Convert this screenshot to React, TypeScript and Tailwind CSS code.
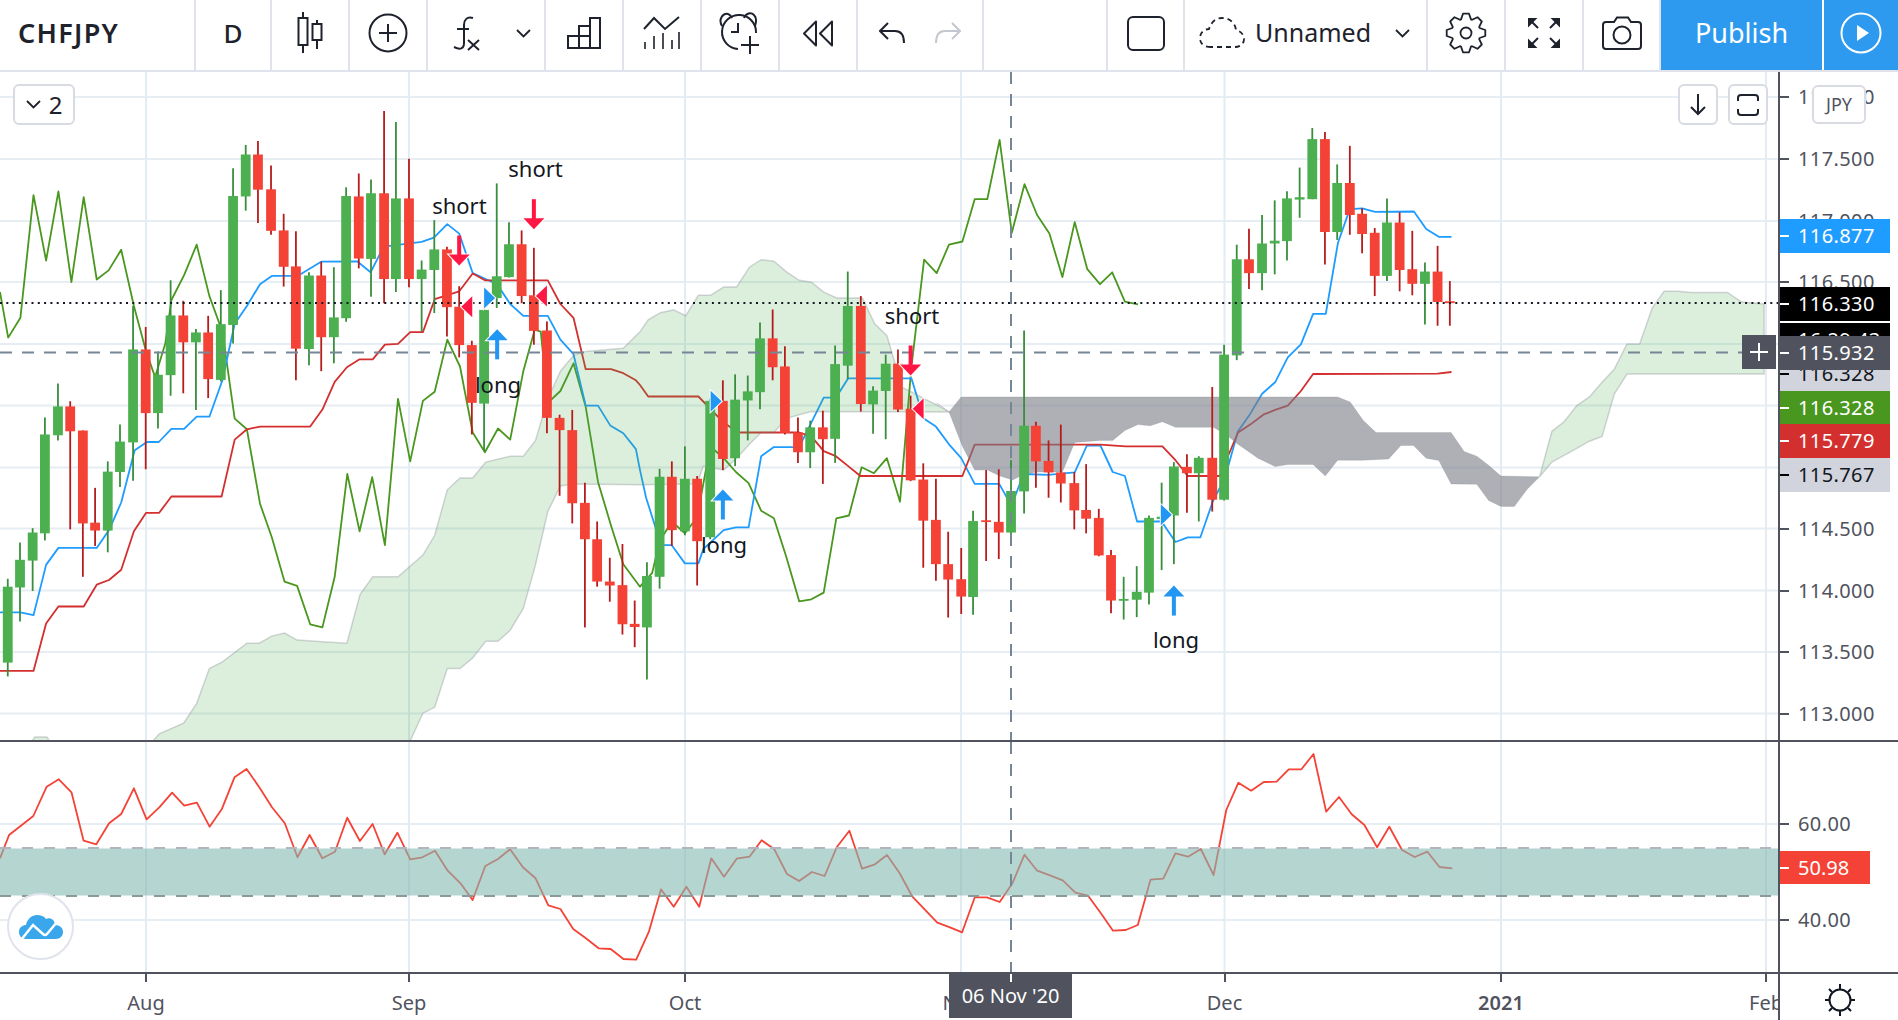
import type { ReactNode } from "react";

// Coordinates below were read off three overlapping crops of the chart.
// Each crop is 640x620 page px drawn at 1568x1568, so they get scaled back here.
const SX = 640 / 1568;
const SY = 620 / 1568;
const X3 = 0;
const X4 = 640;
const X5 = 1258;
const px = (crop: number, x: number) => crop + x * SX;
const py = (y: number) => 130 + y * SY;

type Bar = [number, number, number, number, number, number];
type Pt = [number, number];

// x, wick top, body top, body bottom, wick bottom, up
const BARS3: Bar[] = [
  [19, 1135, 1155, 1347, 1382, 1], [49, 1043, 1087, 1157, 1243, 1], [80, 1007, 1018, 1089, 1166, 1],
  [110, 727, 770, 1020, 1038, 1], [142, 641, 699, 772, 785, 1], [172, 686, 699, 762, 1010, 0],
  [203, 760, 760, 995, 1130, 0], [233, 905, 993, 1013, 1052, 0], [264, 838, 864, 1013, 1068, 1],
  [294, 745, 788, 865, 903, 1], [326, 445, 555, 790, 887, 1], [357, 498, 555, 716, 858, 0],
  [387, 560, 619, 716, 755, 1], [418, 380, 469, 620, 672, 1], [449, 432, 469, 537, 666, 0],
  [480, 503, 512, 537, 708, 1], [510, 470, 512, 630, 678, 0], [541, 405, 491, 632, 636, 1],
  [571, 97, 167, 493, 540, 1], [602, 38, 62, 168, 204, 1], [632, 28, 62, 151, 235, 0],
  [664, 90, 150, 255, 265, 0], [695, 212, 254, 346, 396, 0], [725, 256, 345, 553, 633, 0],
  [757, 360, 368, 554, 595, 1], [787, 333, 368, 524, 610, 0], [818, 347, 474, 524, 590, 1],
  [848, 145, 167, 476, 485, 1], [879, 110, 168, 325, 350, 0], [909, 125, 160, 326, 422, 1],
  [941, -48, 160, 377, 438, 0], [970, -20, 173, 377, 410, 1], [1002, 73, 173, 377, 398, 0],
  [1033, 330, 353, 377, 510, 1], [1064, 228, 302, 354, 463, 1], [1095, 295, 302, 448, 522, 0],
  [1125, 395, 447, 544, 575, 0], [1156, 533, 544, 690, 770, 0], [1186, 428, 455, 692, 812, 1],
  [1217, 135, 370, 425, 450, 1], [1247, 233, 289, 372, 373, 1], [1278, 254, 289, 420, 438, 0],
  [1308, 298, 418, 508, 543, 0], [1340, 484, 507, 728, 767, 0], [1371, 720, 728, 759, 925, 0],
  [1402, 708, 759, 944, 995, 0], [1433, 892, 943, 1035, 1258, 0], [1463, 990, 1035, 1142, 1155, 0],
  [1494, 1082, 1142, 1152, 1193, 0], [1525, 1047, 1151, 1250, 1276, 0], [1555, 1190, 1249, 1257, 1308, 0],
];
const BARS4: Bar[] = [
  [17, 1093, 1128, 1258, 1390, 1], [48, 857, 877, 1130, 1160, 1], [78, 838, 877, 1012, 1052, 0],
  [110, 800, 882, 1015, 1025, 1], [140, 875, 882, 1040, 1152, 0], [172, 680, 685, 1030, 1035, 1],
  [203, 633, 685, 832, 860, 0], [233, 618, 682, 830, 850, 1], [264, 621, 661, 684, 785, 1],
  [294, 487, 527, 663, 706, 1], [325, 454, 527, 600, 633, 0], [355, 547, 598, 766, 770, 0],
  [387, 727, 765, 815, 842, 0], [417, 735, 752, 815, 855, 1], [448, 710, 752, 782, 895, 0],
  [478, 545, 592, 781, 842, 1], [509, 358, 445, 596, 630, 1], [541, 420, 445, 693, 712, 0],
  [571, 648, 659, 694, 768, 1], [602, 568, 591, 660, 782, 1], [632, 555, 591, 707, 713, 0],
  [663, 672, 705, 886, 888, 0], [694, 843, 884, 988, 1107, 0], [725, 882, 986, 1098, 1140, 0],
  [755, 1016, 1098, 1137, 1233, 0], [787, 1057, 1136, 1180, 1224, 0], [816, 963, 989, 1181, 1226, 1],
  [848, 860, 987, 991, 1090, 0], [879, 858, 991, 1018, 1085, 0], [909, 835, 913, 1018, 1028, 1],
  [941, 507, 748, 914, 970, 1], [970, 738, 748, 838, 905, 0], [1001, 785, 837, 866, 930, 0],
  [1031, 745, 866, 894, 942, 0], [1064, 865, 893, 962, 1010, 0], [1093, 845, 961, 983, 1020, 0],
  [1124, 958, 981, 1076, 1078, 0], [1154, 1062, 1075, 1190, 1222, 0], [1185, 1130, 1186, 1190, 1238, 1],
  [1217, 1103, 1168, 1188, 1232, 1], [1247, 975, 981, 1170, 1200, 1], [1278, 892, 978, 984, 1113, 1],
  [1308, 840, 851, 975, 1098, 1], [1340, 820, 852, 868, 968, 0], [1369, 825, 829, 868, 990, 1],
  [1402, 650, 829, 935, 965, 0], [1431, 543, 568, 935, 937, 1], [1462, 290, 327, 570, 582, 1],
  [1492, 250, 327, 362, 402, 0], [1524, 215, 287, 362, 405, 1], [1555, 178, 280, 287, 365, 1],
];
const BARS5: Bar[] = [
  [71, 155, 173, 281, 330, 1], [102, 95, 170, 176, 222, 1], [133, -5, 23, 175, 175, 1],
  [164, 5, 23, 258, 340, 0], [194, 87, 134, 258, 278, 1], [225, 40, 134, 215, 265, 0],
  [255, 198, 212, 263, 312, 0], [286, 248, 260, 369, 420, 0], [316, 173, 234, 369, 382, 1],
  [347, 208, 234, 354, 408, 0], [378, 255, 352, 389, 418, 0], [409, 335, 358, 389, 492, 1],
  [440, 293, 358, 435, 495, 0], [470, 382, 433, 438, 495, 0],
];

const TENKAN3: Pt[] = [[0,1220],[50,1220],[82,1227],[113,1100],[143,1057],[237,1057],[268,1010],[297,942],[330,810],[360,789],[389,789],[420,756],[451,756],[482,725],[513,725],[545,633],[575,490],[605,445],[637,390],[666,369],[729,369],[787,333],[875,332],[908,360],[940,295],[1033,283],[1063,272],[1096,238],[1125,262],[1158,362],[1218,390],[1250,440],[1282,470],[1342,470],[1373,530],[1405,567],[1435,697],[1465,697],[1495,747],[1527,767],[1558,807]];
const TENKAN4: Pt[] = [[0,860],[15,930],[38,1005],[48,1050],[78,1050],[110,1096],[143,1096],[155,1060],[205,1012],[235,1005],[266,1005],[297,825],[328,802],[390,802],[450,677],[480,677],[510,628],[665,628],[695,730],[725,750],[757,795],[787,830],[820,895],[880,895],[910,950],[940,870],[1000,872],[1065,866],[1095,798],[1128,798],[1158,865],[1188,875],[1218,990],[1278,990],[1312,1042],[1342,1030],[1373,1030],[1403,940],[1433,880],[1465,762],[1495,718]];
const TENKAN5: Pt[] = [[10,667],[42,638],[73,575],[105,542],[135,465],[166,465],[196,285],[225,200],[255,198],[287,207],[382,206],[412,250],[443,270],[474,270]];

const KIJUN3: Pt[] = [[0,1368],[82,1368],[113,1248],[143,1205],[205,1205],[237,1150],[267,1138],[297,1112],[328,1015],[358,968],[390,968],[420,927],[543,927],[575,783],[605,757],[637,750],[760,750],[790,707],[820,637],[850,600],[881,580],[913,580],[943,543],[975,541],[1005,511],[1036,511],[1065,428],[1125,408],[1158,363],[1188,380],[1342,380],[1373,440],[1405,475],[1435,605],[1497,605],[1527,615],[1558,633]];
const KIJUN4: Pt[] = [[0,645],[20,674],[143,674],[205,740],[240,765],[390,765],[420,775],[450,812],[480,825],[510,850],[540,875],[790,875],[820,796],[1065,796],[1128,796],[1190,800],[1280,800],[1312,835],[1342,875],[1420,875],[1465,765],[1495,745],[1527,720]];
const KIJUN5: Pt[] = [[42,708],[73,697],[105,660],[135,617],[440,616],[474,612]];

const CHIKOU3: Pt[] = [[0,410],[20,525],[50,475],[82,165],[113,330],[143,155],[175,385],[205,170],[237,378],[266,355],[297,303],[328,445],[358,560],[380,625],[405,540],[420,430],[451,367],[482,290],[513,420],[545,510],[575,730],[605,757],[637,945],[666,1030],[697,1142],[728,1153],[760,1250],[790,1258],[820,1130],[851,870],[881,1015],[912,878],[943,1050],[975,680],[1005,838],[1036,685],[1065,662],[1096,530],[1127,598],[1158,765],[1188,815],[1220,755],[1250,783],[1282,610],[1310,505],[1325,510],[1342,690],[1373,660],[1405,590],[1435,700],[1465,890],[1497,1000],[1527,1098]];
const CHIKOU4: Pt[] = [[0,1155],[30,1120],[48,1040],[78,990],[110,1020],[140,980],[172,800],[205,830],[235,865],[266,893],[297,963],[328,982],[358,1078],[390,1192],[420,1187],[450,1170],[481,982],[512,975],[543,853],[573,868],[605,830],[637,940],[665,600],[696,328],[727,362],[757,290],[790,282],[820,175],[851,175],[881,25],[911,260],[942,137],[973,215],[1003,262],[1035,372],[1065,233],[1096,352],[1127,390],[1157,360],[1188,434],[1220,441]];

const CLOUD_TOP3: Pt[] = [[345,1575],[375,1545],[390,1527],[450,1500],[482,1450],[513,1362],[545,1345],[605,1298],[635,1298],[666,1280],[697,1272],[728,1290],[790,1294],[850,1298],[882,1175],[913,1130],[975,1130],[1036,1075],[1065,1025],[1096,910],[1127,880],[1158,880],[1190,840],[1250,825],[1282,825],[1312,785],[1342,680],[1373,610],[1405,570],[1435,560],[1527,552]];
const CLOUD_TOP4: Pt[] = [[0,510],[20,480],[50,462],[82,455],[112,470],[143,418],[173,418],[205,397],[237,397],[268,347],[297,328],[328,332],[358,358],[390,380],[420,385],[450,410],[482,425],[545,425],[575,490],[605,520],[625,590],[640,650],[670,665],[697,680],[727,695],[757,713]];
const CLOUD_LOW4: Pt[] = [[757,713],[420,712],[390,720],[358,730],[328,765],[297,765],[268,795],[237,830],[205,860],[155,850],[140,895],[0,897]];
const CLOUD_LOW3: Pt[] = [[1405,895],[1373,900],[1342,965],[1312,1100],[1282,1210],[1250,1265],[1220,1293],[1190,1293],[1158,1335],[1127,1362],[1096,1362],[1065,1460],[1036,1475],[1005,1545],[990,1580]];
const CLOUD_BUMP: Pt[] = [[70,1560],[85,1535],[115,1535],[130,1560]];

const GREY_TOP4: Pt[] = [[727,690],[757,713],[787,675],[1568,675]];
const GREY_TOP5: Pt[] = [[195,675],[226,688],[258,735],[289,765],[473,765],[505,813],[536,825],[565,848],[595,875],[690,877]];
const GREY_LOW5: Pt[] = [[660,908],[628,952],[595,952],[565,937],[536,896],[473,895],[443,836],[412,830],[381,798],[350,798],[320,832],[258,835],[195,835],[165,875],[135,846],[73,846],[42,851],[0,830]];
const GREY_LOW4: Pt[] = [[1465,795],[1435,770],[1405,752],[1312,752],[1280,738],[1250,748],[1220,745],[1188,760],[1158,785],[1127,785],[1065,790],[1035,865],[975,865],[943,870],[913,885],[882,875],[851,860],[820,860],[790,800],[757,713]];

const CLOUD2_TOP5: Pt[] = [[690,877],[720,762],[750,738],[781,697],[812,675],[843,638],[873,605],[904,541],[935,541],[966,450],[995,408],[1030,408],[1060,411],[1150,411],[1185,435],[1240,440]];
const CLOUD2_LOW5: Pt[] = [[1240,617],[904,617],[873,668],[843,775],[812,787],[781,805],[720,840]];

// RSI crops are 950x290 page px drawn at 1568x870
const RSI_A: Pt[] = [[0,385],[15,315],[55,258],[77,170],[97,148],[118,187],[138,332],[159,343],[180,280],[200,252],[221,175],[242,268],[263,232],[284,188],[304,227],[325,218],[346,290],[366,238],[387,142],[407,117],[428,172],[449,232],[470,280],[491,382],[511,315],[532,385],[553,365],[573,263],[594,333],[615,282],[635,373],[656,308],[677,388],[697,382],[718,362],[739,422],[760,460],[780,510],[801,408],[822,387],[842,358],[863,412],[884,445],[905,526],[925,537],[946,597],[967,625],[988,655],[1008,657],[1029,687],[1050,689],[1071,605],[1091,478],[1112,530],[1133,470],[1154,530],[1174,385],[1195,440],[1216,386],[1237,380],[1257,331],[1278,358],[1299,432],[1319,453],[1340,426],[1361,438],[1381,352],[1402,302],[1423,416],[1443,404],[1464,375],[1485,430],[1506,500],[1547,578]];
const RSI_B: Pt[] = [[0,592],[20,607],[41,502],[61,502],[82,516],[103,460],[123,374],[144,422],[165,436],[186,451],[207,488],[228,497],[249,550],[269,602],[290,600],[310,585],[331,449],[352,446],[372,370],[393,380],[414,357],[435,435],[456,240],[476,158],[497,182],[518,156],[539,155],[559,118],[580,118],[600,72],[621,245],[642,201],[663,253],[684,285],[705,352],[725,290],[746,360],[767,381],[788,365],[808,411],[829,415]];

const pts = (crop: number, list: Pt[]) => list.map(([x, y]) => `${px(crop, x).toFixed(1)},${py(y).toFixed(1)}`).join(" ");
const rsiPts = (crop: number, list: Pt[]) =>
  list.map(([x, y]) => `${(crop + (x * 950) / 1568).toFixed(1)},${(730 + y / 3).toFixed(1)}`).join(" ");

const V_GRID = [146, 409, 685, 961, 1224.5, 1501, 1766];
const H_GRID = [97, 159, 221, 282, 344, 405.5, 467.5, 528.5, 590.5, 652, 713.5];

const AXIS_PRICES: [string, number][] = [
  ["118.000", 97], ["117.500", 159], ["117.000", 221], ["116.500", 282],
  ["114.500", 529], ["114.000", 591], ["113.500", 652], ["113.000", 714],
];

const LINE = "#131722";
const TOOL_TEXT = "#1e222d";

function Candles({ crop, bars }: { crop: number; bars: Bar[] }) {
  return (
    <>
      {bars.map(([x, wt, bt, bb, wb, up]) => (
        <g key={x}>
          <line x1={px(crop, x)} x2={px(crop, x)} y1={py(wt)} y2={py(wb)} stroke={up ? "#388e3c" : "#b71c1c"} strokeWidth={1.8} />
          <rect x={px(crop, x) - 4.9} y={py(bt)} width={9.8} height={Math.max(py(bb) - py(bt), 1.8)} fill={up ? "#4caf50" : "#f44336"} />
        </g>
      ))}
    </>
  );
}

function DownArrow({ crop, x, top }: { crop: number; x: number; top: number }) {
  const cx = px(crop, x);
  const y = py(top);
  return (
    <g fill="#ff1744">
      <polygon points={`${cx - 10.5},${y + 19} ${cx + 10.5},${y + 19} ${cx},${y + 30}`} stroke="#fff" strokeWidth={2} paintOrder="stroke" />
      <rect x={cx - 2} y={y} width={4} height={20} />
    </g>
  );
}

function UpArrow({ crop, x, bottom }: { crop: number; x: number; bottom: number }) {
  const cx = px(crop, x);
  const y = py(bottom);
  return (
    <g fill="#2196f3">
      <polygon points={`${cx - 10.5},${y - 19} ${cx + 10.5},${y - 19} ${cx},${y - 30}`} stroke="#fff" strokeWidth={2} paintOrder="stroke" />
      <rect x={cx - 2} y={y - 20} width={4} height={20} />
    </g>
  );
}

function Flag({ crop, x, y, dir }: { crop: number; x: number; y: number; dir: 1 | -1 }) {
  const tipX = px(crop, x);
  const tipY = py(y);
  return (
    <polygon
      points={`${tipX},${tipY} ${tipX - dir * 11},${tipY - 10.5} ${tipX - dir * 11},${tipY + 10.5}`}
      fill={dir === 1 ? "#2196f3" : "#ff1744"}
      stroke="#fff"
      strokeWidth={2}
      paintOrder="stroke"
    />
  );
}

function ChartLabel({ x, y, children }: { x: number; y: number; children: string }) {
  return (
    <text x={x} y={y} textAnchor="middle" fontSize={22} fill={LINE}>
      {children}
    </text>
  );
}

function MainPane() {
  return (
    <svg className="block h-[668px] w-[1778px]" viewBox="0 72 1778 668">
      {H_GRID.map((y) => (
        <line key={y} x1={0} x2={1778} y1={y} y2={y} stroke="#e6eef4" strokeWidth={2} />
      ))}
      {V_GRID.map((x) => (
        <line key={x} x1={x} x2={x} y1={72} y2={740} stroke="#e3ecf2" strokeWidth={2} />
      ))}

      <g fill="none" strokeWidth={1.8} strokeLinejoin="round">
        <polyline points={`${pts(X3, CHIKOU3)} ${pts(X4, CHIKOU4)}`} stroke="#4a971f" />
        <polyline points={`${pts(X3, TENKAN3)} ${pts(X4, TENKAN4)} ${pts(X5, TENKAN5)}`} stroke="#1e9cff" />
        <polyline points={`${pts(X3, KIJUN3)} ${pts(X4, KIJUN4)} ${pts(X5, KIJUN5)}`} stroke="#d32f2f" />
      </g>

      {/* clouds sit over the lines, that is why the lines go darker inside them */}
      <g fill="#4caf50" fillOpacity={0.2} stroke="#787b86" strokeOpacity={0.3} strokeWidth={1.5}>
        <polygon points={`${pts(X3, CLOUD_TOP3)} ${pts(X4, CLOUD_TOP4)} ${pts(X4, CLOUD_LOW4)} ${pts(X3, CLOUD_LOW3)}`} />
        <polygon points={pts(X3, CLOUD_BUMP)} />
        <polygon points={`${pts(X5, CLOUD2_TOP5)} ${pts(X5, CLOUD2_LOW5)}`} />
      </g>
      <polygon
        points={`${pts(X4, GREY_TOP4)} ${pts(X5, GREY_TOP5)} ${pts(X5, GREY_LOW5)} ${pts(X4, GREY_LOW4)}`}
        fill="#787b86"
        fillOpacity={0.6}
        stroke="#787b86"
        strokeOpacity={0.2}
      />

      <Candles crop={X3} bars={BARS3} />
      <Candles crop={X4} bars={BARS4} />
      <Candles crop={X5} bars={BARS5} />

      <line x1={0} x2={1778} y1={303} y2={303} stroke={LINE} strokeWidth={2} strokeDasharray="2 4.3" />
      <line x1={0} x2={1742} y1={352.6} y2={352.6} stroke="#758696" strokeWidth={2} strokeDasharray="12 10" />
      <line x1={1011} x2={1011} y1={72} y2={740} stroke="#758696" strokeWidth={2} strokeDasharray="12 10" />

      <DownArrow crop={X3} x={1125} top={267} />
      <DownArrow crop={X3} x={1308} top={175} />
      <DownArrow crop={X4} x={663} top={545} />
      <UpArrow crop={X3} x={1218} bottom={580} />
      <UpArrow crop={X4} x={203} bottom={985} />
      <UpArrow crop={X4} x={1308} bottom={1228} />
      <Flag crop={X3} x={1130} y={447} dir={-1} />
      <Flag crop={X3} x={1313} y={420} dir={-1} />
      <Flag crop={X4} x={668} y={705} dir={-1} />
      <Flag crop={X3} x={1213} y={425} dir={1} />
      <Flag crop={X4} x={200} y={686} dir={1} />
      <Flag crop={X4} x={1303} y={973} dir={1} />

      <ChartLabel x={459.4} y={214}>short</ChartLabel>
      <ChartLabel x={535.5} y={177}>short</ChartLabel>
      <ChartLabel x={498} y={393}>long</ChartLabel>
      <ChartLabel x={724} y={553}>long</ChartLabel>
      <ChartLabel x={912} y={324}>short</ChartLabel>
      <ChartLabel x={1176} y={648}>long</ChartLabel>
    </svg>
  );
}

function RsiPane() {
  return (
    <svg className="block h-[230px] w-[1778px]" viewBox="0 742 1778 230">
      {[824, 920].map((y) => (
        <line key={y} x1={0} x2={1778} y1={y} y2={y} stroke="#e6eef4" strokeWidth={2} />
      ))}
      {V_GRID.map((x) => (
        <line key={x} x1={x} x2={x} y1={742} y2={972} stroke="#e3ecf2" strokeWidth={2} />
      ))}
      <polyline
        points={`${rsiPts(0, RSI_A)} ${rsiPts(950, RSI_B)}`}
        fill="none"
        stroke="#f44336"
        strokeWidth={1.8}
        strokeLinejoin="round"
      />
      <rect x={0} y={848.5} width={1778} height={47} fill="#84b9b2" fillOpacity={0.6} />
      <line x1={0} x2={1778} y1={848} y2={848} stroke="#b2b5be" strokeWidth={2} strokeDasharray="11 11" />
      <line x1={0} x2={1778} y1={896} y2={896} stroke="#8a9a98" strokeWidth={2} strokeDasharray="11 11" />
      <line x1={1011} x2={1011} y1={742} y2={972} stroke="#758696" strokeWidth={2} strokeDasharray="12 10" />
    </svg>
  );
}

function AxisValue({ y, top, text }: { y: number; top: number; text: string }) {
  return (
    <div className="absolute left-0 flex h-[30px] items-center text-[#50535e]" style={{ top: y - top - 15 }}>
      <span className="h-[2px] w-[9px] bg-[#50535e]" />
      <span className="ml-[9px] text-[20px] tracking-[0.4px]">{text}</span>
    </div>
  );
}

function PriceTag({ y, top, text, bg, fg, tick }: { y: number; top: number; text: string; bg: string; fg: string; tick: string }) {
  return (
    <div className={`absolute left-0 flex h-[34px] w-[110px] items-center ${bg} ${fg}`} style={{ top: y - top - 17 }}>
      <span className={`h-[2px] w-[9px] ${tick}`} />
      <span className="ml-[9px] text-[20px] tracking-[0.4px]">{text}</span>
    </div>
  );
}

function PriceAxis() {
  return (
    <div className="relative h-[668px] w-[118px]">
      {AXIS_PRICES.map(([text, y]) => (
        <AxisValue key={text} y={y} top={72} text={text} />
      ))}
      <PriceTag y={236} top={72} text="116.877" bg="bg-[#1e9cff]" fg="text-white" tick="bg-white" />
      <PriceTag y={304} top={72} text="116.330" bg="bg-black" fg="text-white" tick="bg-white" />
      <div className="absolute left-0 top-[249px] h-[34px] w-[110px] overflow-hidden border-t-2 border-white bg-black pl-[18px] text-[20px] leading-[34px] tracking-[0.4px] text-white">
        16:29:43
      </div>
      <PriceTag y={374} top={72} text="116.328" bg="bg-[#d1d4dc]" fg="text-[#131722]" tick="bg-black" />
      <PriceTag y={352.5} top={72} text="115.932" bg="bg-[#50535e]" fg="text-white" tick="bg-white" />
      <PriceTag y={408} top={72} text="116.328" bg="bg-[#4a971f]" fg="text-white" tick="bg-white" />
      <PriceTag y={441} top={72} text="115.779" bg="bg-[#d32f2f]" fg="text-white" tick="bg-white" />
      <PriceTag y={475} top={72} text="115.767" bg="bg-[#d1d4dc]" fg="text-[#131722]" tick="bg-black" />
      <div className="absolute left-[32px] top-[13px] flex h-[39px] w-[54px] items-center justify-center rounded-[6px] border-2 border-[#d9dbe2] bg-white text-[18px] text-[#50535e]">
        JPY
      </div>
    </div>
  );
}

function RsiAxis() {
  return (
    <div className="relative h-[230px] w-[118px]">
      <AxisValue y={824} top={742} text="60.00" />
      <AxisValue y={920} top={742} text="40.00" />
      <div className="absolute left-0 top-[109px] flex h-[33px] w-[90px] items-center bg-[#f44336] text-white">
        <span className="h-[2px] w-[9px] bg-white" />
        <span className="ml-[9px] text-[20px]">50.98</span>
      </div>
    </div>
  );
}

function TimeAxis() {
  const labels: [string, number, string][] = [
    ["Aug", 146, "font-normal"],
    ["Sep", 409, "font-normal"],
    ["Oct", 685, "font-normal"],
    ["Nov", 961, "font-normal"],
    ["Dec", 1224.5, "font-normal"],
    ["2021", 1501, "font-semibold"],
    ["Feb", 1766, "font-normal"],
  ];
  return (
    <div className="relative h-[46px] w-[1778px] overflow-hidden">
      {labels.map(([text, x, weight]) => (
        <div key={text} className="absolute top-0" style={{ left: x - 1 }}>
          <div className="h-[8px] w-[2px] bg-[#50535e]" />
          <div className={`absolute left-[1px] top-[14px] -translate-x-1/2 text-[20px] text-[#50535e] ${weight}`}>{text}</div>
        </div>
      ))}
      <div className="absolute left-[949px] top-0 flex h-[44px] w-[123px] items-center justify-center bg-[#50535e] text-[20px] text-white">
        06 Nov '20
        <span className="absolute left-[61px] top-0 h-[8px] w-[2px] bg-white" />
      </div>
    </div>
  );
}

/* toolbar */

function Cell({ width, children, className = "" }: { width: string; children?: ReactNode; className?: string }) {
  return (
    <div className={`flex h-full shrink-0 items-center justify-center border-r-2 border-[#e0e3eb] pb-[4px] ${width} ${className}`}>
      {children}
    </div>
  );
}

function Chevron() {
  return (
    <svg width="15" height="9" viewBox="0 0 15 9" fill="none" stroke={TOOL_TEXT} strokeWidth="1.8">
      <path d="M1 1L7.5 7.5L14 1" />
    </svg>
  );
}

function gearPoints(cx: number, cy: number, outer: number, inner: number, teeth: number) {
  const out: string[] = [];
  const step = (Math.PI * 2) / teeth;
  for (let i = 0; i < teeth; i++) {
    const a = i * step - Math.PI / 2;
    const offs: [number, number][] = [
      [-0.5, inner],
      [-0.22, outer],
      [0.22, outer],
      [0.5, inner],
    ];
    for (const [o, r] of offs) {
      const t = a + o * step * 0.9;
      out.push(`${(cx + Math.cos(t) * r).toFixed(1)},${(cy + Math.sin(t) * r).toFixed(1)}`);
    }
  }
  return out.join(" ");
}

function Toolbar() {
  const ic = { fill: "none", stroke: TOOL_TEXT, strokeWidth: 2 };
  return (
    <div className="flex h-[72px] w-[1898px] border-b-2 border-[#e0e3eb] text-[25px] text-[#1e222d]">
      <Cell width="w-[196px]" className="justify-start pl-[18px]">
        <span className="text-[27px] font-semibold tracking-[1.3px]">CHFJPY</span>
      </Cell>
      <Cell width="w-[76px]">
        <span className="text-[26px] font-medium">D</span>
      </Cell>
      <Cell width="w-[78px]">
        <svg width="28" height="42" viewBox="0 0 28 42" {...ic}>
          <path d="M7 0V41M21 8V37" />
          <rect x="2.5" y="6" width="9" height="27" fill="#fff" />
          <rect x="16.5" y="12" width="9" height="16" fill="#fff" />
        </svg>
      </Cell>
      <Cell width="w-[78px]">
        <svg width="40" height="40" viewBox="0 0 40 40" {...ic}>
          <circle cx="20" cy="20" r="18.5" />
          <path d="M20 11V29M11 20H29" />
        </svg>
      </Cell>
      <Cell width="w-[118px]" className="justify-start">
        <svg className="ml-[24px]" width="30" height="36" viewBox="0 0 30 36" {...ic}>
          <path d="M21 3C15 1 12 5 12 10V28C12 34 8 35 2 32" />
          <path d="M5 14H17M16 25L27 35M27 25L16 35" />
        </svg>
        <span className="ml-[34px]">
          <Chevron />
        </span>
      </Cell>
      <Cell width="w-[78px]">
        <svg width="34" height="32" viewBox="0 0 34 32" {...ic}>
          <path d="M1 19H12V31H1ZM12 9H23V31H12ZM23 1H33V31H23ZM12 19H23" />
        </svg>
      </Cell>
      <Cell width="w-[78px]">
        <svg width="38" height="34" viewBox="0 0 38 34" {...ic}>
          <path d="M1 13L11 2L22 13L36 1" />
          <path d="M2 26V33M11 20V33M20 17V33M29 24V33M36 16V33" strokeWidth="1.6" />
        </svg>
      </Cell>
      <Cell width="w-[78px]">
        <svg width="42" height="46" viewBox="0 0 42 46" {...ic}>
          <path d="M19 39A17 17 0 1 1 37 23" />
          <path d="M3 16C-1 9 4 3 9 4C11 4.500 12 6 13 8M25 8C27 3 32 2 35 5C38 8 37 13 36 16" />
          <path d="M19 13V22H12M31 26V44M22 35H40" />
        </svg>
      </Cell>
      <Cell width="w-[78px]">
        <svg width="31" height="27" viewBox="0 0 31 27" {...ic}>
          <path d="M13 1.500L1 13.500L13 25.500ZM29 1.500L17 13.500L29 25.500Z" strokeLinejoin="round" />
        </svg>
      </Cell>
      <Cell width="w-[126px]" className="justify-start">
        <svg className="ml-[21px]" width="26" height="22" viewBox="0 0 26 22" {...ic}>
          <path d="M9 1L1 9L9 17M1 9H16C22 9 25 13 25 21" />
        </svg>
        <svg className="ml-[30px]" width="26" height="22" viewBox="0 0 26 22" {...ic} stroke="#c4c7cf">
          <path d="M17 1L25 9L17 17M25 9H10C4 9 1 13 1 21" />
        </svg>
      </Cell>
      <Cell width="w-[124px]" />
      <Cell width="w-[77px]">
        <svg width="38" height="35" viewBox="0 0 38 35" {...ic}>
          <rect x="1" y="1" width="36" height="33" rx="5" />
        </svg>
      </Cell>
      <Cell width="w-[243px]" className="justify-start">
        <svg className="ml-[14px]" width="46" height="32" viewBox="0 0 46 32" {...ic} strokeWidth="1.8" strokeDasharray="5 4">
          <path d="M12 30C4 30 1 26 1 21C1 16 5 12 10 12C12 5 17 1 23 1C31 1 36 6 37 13C42 14 45 18 45 22C45 27 41 30 36 30Z" />
        </svg>
        <span className="ml-[10px]">Unnamed</span>
        <span className="ml-[24px]">
          <Chevron />
        </span>
      </Cell>
      <Cell width="w-[78px]">
        <svg width="42" height="42" viewBox="0 0 42 42" {...ic} strokeWidth="1.8">
          <polygon points={gearPoints(21, 21, 19.5, 14.5, 8)} strokeLinejoin="round" />
          <circle cx="21" cy="21" r="5.500" />
        </svg>
      </Cell>
      <Cell width="w-[78px]">
        <svg width="34" height="32" viewBox="0 0 34 32" {...ic} fill={TOOL_TEXT}>
          <path d="M2 8V2H8ZM26 2H32V8ZM2 24V30H8ZM32 24V30H26Z" />
          <path d="M2 2L11 11M32 2L23 11M2 30L11 21M32 30L23 21" />
        </svg>
      </Cell>
      <Cell width="w-[77px]">
        <svg width="42" height="34" viewBox="0 0 42 34" {...ic}>
          <path d="M2 9Q2 6 5 6H13L16 1.500H27L30 6H37Q40 6 40 9V30Q40 33 37 33H5Q2 33 2 30Z" />
          <circle cx="21" cy="19" r="8.500" />
        </svg>
      </Cell>
      <div className="flex h-[70px] w-[161px] shrink-0 items-center justify-center bg-[#2e9aef] pb-[4px] text-[27px] text-white">Publish</div>
      <div className="h-[70px] w-[2px] shrink-0 bg-white" />
      <div className="flex h-[70px] flex-1 items-center justify-center bg-[#2e9aef] pb-[4px]">
        <svg width="42" height="42" viewBox="0 0 42 42" fill="none" stroke="#fff" strokeWidth="2">
          <circle cx="21" cy="21" r="19.500" />
          <path d="M17 13L29 21L17 29Z" fill="#fff" stroke="none" />
        </svg>
      </div>
    </div>
  );
}

function SquareButton({ className, children }: { className: string; children: ReactNode }) {
  return (
    <div className={`absolute top-[12px] flex h-[41px] items-center justify-center rounded-[6px] border-2 border-[#d9dbe2] bg-white text-[#1e222d] ${className}`}>
      {children}
    </div>
  );
}

export default function App() {
  return (
    <div className="h-[1020px] w-[1898px] overflow-hidden bg-white font-['Noto_Sans',sans-serif]">
      <Toolbar />
      <div className="flex h-[668px]">
        <div className="relative w-[1778px]">
          <MainPane />
          <SquareButton className="left-[13px] w-[62px] gap-[8px] text-[24px]">
            <Chevron />
            <span>2</span>
          </SquareButton>
          <SquareButton className="left-[1678px] w-[40px]">
            <svg width="16" height="22" viewBox="0 0 16 22" fill="none" stroke="currentColor" strokeWidth="2">
              <path d="M8 0V20M1 13L8 20L15 13" />
            </svg>
          </SquareButton>
          <SquareButton className="left-[1728px] w-[40px]">
            <svg width="22" height="22" viewBox="0 0 22 22" fill="none" stroke="currentColor" strokeWidth="2">
              <path d="M1 7V4Q1 1 4 1H18Q21 1 21 4V7M1 15V18Q1 21 4 21H18Q21 21 21 18V15" />
            </svg>
          </SquareButton>
          <div className="absolute left-[1742px] top-[263px] flex h-[34px] w-[34px] items-center justify-center bg-[#50535e]">
            <svg width="20" height="20" viewBox="0 0 20 20" stroke="#fff" strokeWidth="2">
              <path d="M10 1V19M1 10H19" />
            </svg>
          </div>
        </div>
        <div className="border-l-2 border-[#50535e]">
          <PriceAxis />
        </div>
      </div>
      <div className="h-[2px] bg-[#50535e]" />
      <div className="flex h-[230px]">
        <div className="relative w-[1778px]">
          <RsiPane />
          <div className="absolute left-[7px] top-[151px] flex h-[67px] w-[67px] items-center justify-center rounded-full border-2 border-[#e0e3eb] bg-white">
            <svg width="44" height="26" viewBox="0 0 44 26">
              <path d="M7 25C2 25 0 21 0 18C0 13 4 11 7 11C8 5 13 1 18 1C22 1 25 2 27 5C31 3 36 6 36 11C41 11 44 14 44 18C44 22 41 25 37 25Z" fill="#3aa6ec" />
              <path d="M2 26L14 11L24 20Q26 22 28 20L38 8" fill="none" stroke="#fff" strokeWidth="2.500" />
            </svg>
          </div>
        </div>
        <div className="border-l-2 border-[#50535e]">
          <RsiAxis />
        </div>
      </div>
      <div className="h-[2px] bg-[#50535e]" />
      <div className="flex h-[46px]">
        <TimeAxis />
        <div className="flex flex-1 items-center justify-center border-l-2 border-[#50535e] pl-[2px] pt-[6px]">
          <svg width="32" height="34" viewBox="0 0 32 34" fill="none" stroke="#131722" strokeWidth="2">
            <circle cx="16" cy="17" r="10.500" />
            <path d="M16 1V6M16 28V33M1 17H5M27 17H31M5 6L8 9M27 6L24 9M5 28L8 25M27 28L24 25" />
          </svg>
        </div>
      </div>
    </div>
  );
}
